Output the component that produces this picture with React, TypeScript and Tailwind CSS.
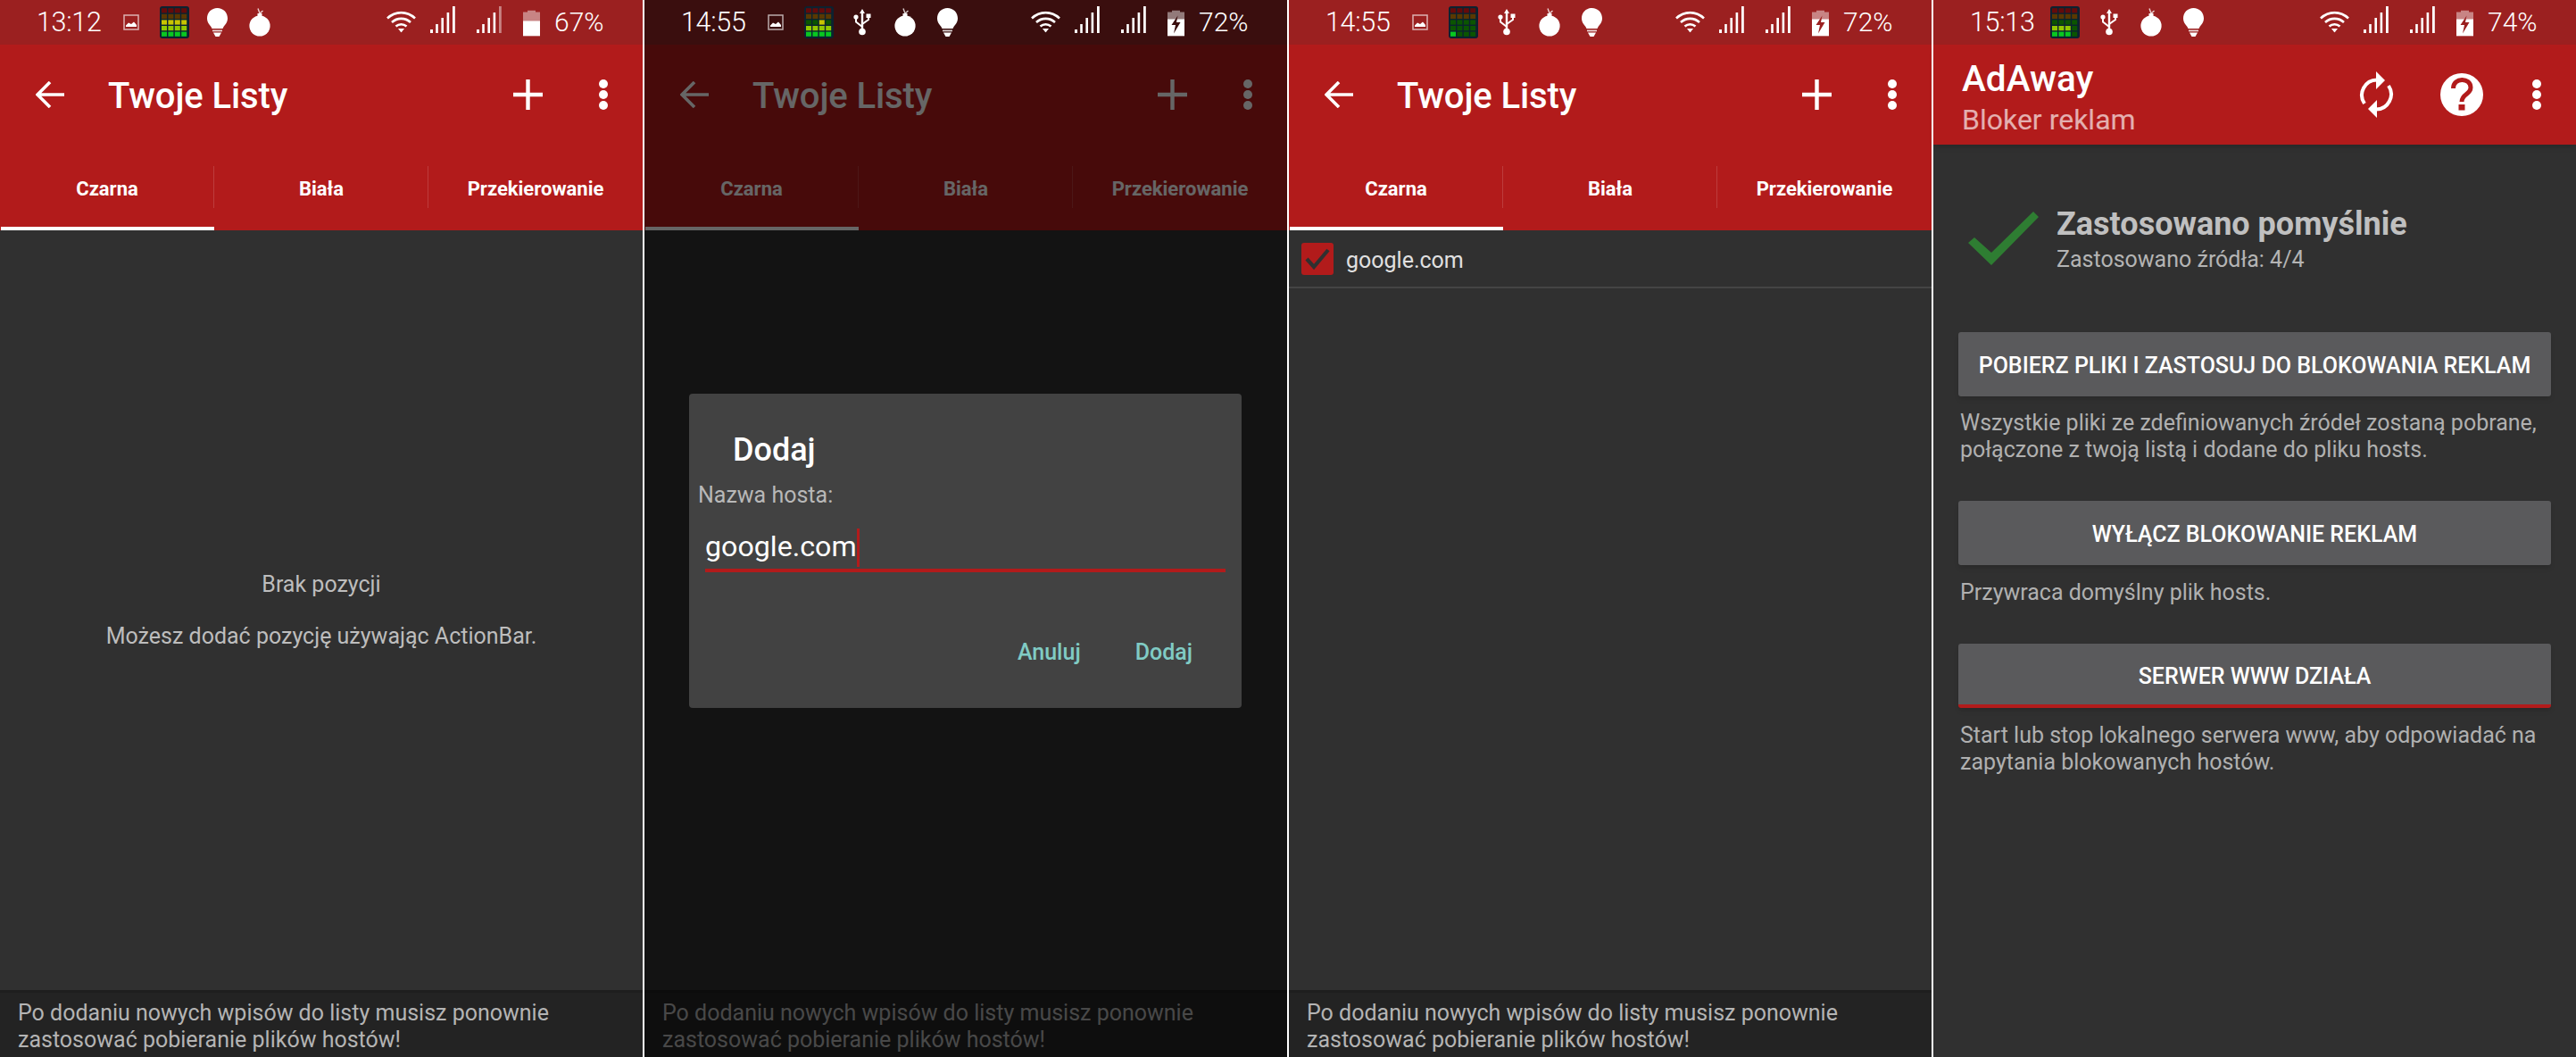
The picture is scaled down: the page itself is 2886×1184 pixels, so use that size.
import React from "react";

function Eq({ lit }: { lit: boolean[][] }) {
  const on = ["#7a0a0a", "#7a4a00", "#c8c400", "#92c800", "#08c820"];
  const off = ["#640a0a", "#5a3800", "#0b5500", "#0b5500", "#0b5500"];
  return (
    <svg width="33" height="36" viewBox="0 0 33 36" className="shrink-0">
      <rect width="33" height="36" rx="3" fill="#0c2230" />
      {lit.map((row, r) =>
        row.map((v, c) => (
          <rect key={`${r}-${c}`} x={2 + c * 7.4} y={2.2 + r * 6.6} width="6" height="5.2" fill={v ? on[r] : off[r]} />
        ))
      )}
    </svg>
  );
}

function ImgIcon() {
  return (
    <svg width="18" height="18" viewBox="0 0 18 18" className="shrink-0">
      <rect x="1" y="1" width="16" height="16" fill="none" stroke="#fff" strokeOpacity="0.65" strokeWidth="1.5" />
      <path d="M3 14 L3 12.5 L6 9.5 L9 11 L12 8.5 L15 12 L15 14 Z" fill="#fff" />
    </svg>
  );
}

function Bulb() {
  return (
    <svg width="23" height="32" viewBox="0 0 23 32" className="shrink-0">
      <path d="M11.5 0 C18 0 23 5 23 11.5 C23 16 20.5 18.5 18.5 21 L17.5 23 L5.5 23 L4.5 21 C2.5 18.5 0 16 0 11.5 C0 5 5 0 11.5 0 Z" fill="#fff" />
      <rect x="6" y="24.5" width="11" height="1.8" fill="#fff" fillOpacity="0.8" />
      <path d="M7 27.5 H16 L13.5 32 H9.5 Z" fill="#fff" />
    </svg>
  );
}

function Bomb() {
  return (
    <svg width="24" height="32" viewBox="0 0 24 32" className="shrink-0">
      <circle cx="12" cy="20" r="11.6" fill="#fff" />
      <rect x="9.5" y="6" width="5" height="4" fill="#fff" />
      <path d="M10 0.5 L12 6 L15.5 3" fill="none" stroke="#fff" strokeOpacity="0.8" strokeWidth="1.4" />
    </svg>
  );
}

function Usb() {
  return (
    <svg width="20" height="30" viewBox="0 0 20 30" className="shrink-0">
      <path d="M10 0 L13 5 H7 Z" fill="#fff" />
      <path d="M10 4 V24" stroke="#fff" strokeWidth="2.4" />
      <circle cx="10" cy="25.5" r="3.8" fill="#fff" />
      <path d="M10 20 L3 14.5 V10" fill="none" stroke="#fff" strokeWidth="2" />
      <circle cx="3" cy="9" r="2.6" fill="#fff" />
      <path d="M10 17 L17 12 V9" fill="none" stroke="#fff" strokeWidth="2" />
      <rect x="14.5" y="5.5" width="5" height="4.5" fill="#fff" />
    </svg>
  );
}

function Wifi() {
  return (
    <svg width="33" height="24" viewBox="0 0 33 24" className="shrink-0">
      <g fill="none" stroke="#fff" strokeWidth="2.6">
        <path d="M1 8 C10 -0.5 23 -0.5 32 8" />
        <path d="M6 12.5 C12 7 21 7 27 12.5" />
        <path d="M10.5 17 C14 14 19 14 22.5 17" />
      </g>
      <path d="M13 19.5 H20 L16.5 24 Z" fill="#fff" />
    </svg>
  );
}

function Signal({ dimLast }: { dimLast?: boolean }) {
  return (
    <svg width="28" height="30" viewBox="0 0 28 30" className="shrink-0">
      <rect x="0" y="26" width="3" height="4" fill="#fff" />
      <rect x="6.2" y="20" width="2.6" height="10" fill="#fff" />
      <rect x="12.4" y="13" width="2.6" height="17" fill="#fff" />
      <rect x="18.6" y="7" width="2.6" height="23" fill="#fff" />
      <rect x="25" y="0" width="2.8" height="30" fill="#fff" fillOpacity={dimLast ? 0.45 : 1} />
    </svg>
  );
}

function Battery({ top, charging, bolt }: { top: number; charging?: boolean; bolt: string }) {
  return (
    <svg width="19" height="29" viewBox="0 0 19 29" className="shrink-0">
      <path d="M5 0 H14 V2 H19 V29 H0 V2 H5 Z" fill="#fff" fillOpacity="0.45" />
      <rect x="0" y={top} width="19" height={29 - top} fill="#fff" />
      {charging && <path d="M11.5 6 L4.5 16.5 H9 L7 26 L14.5 13.5 H10 Z" fill={bolt} />}
    </svg>
  );
}

type S = {
  time: string;
  pct: string;
  bg: string;
  eq: boolean[][];
  charging?: boolean;
  top: number;
  dimLast?: boolean;
  kind: "a" | "b" | "c";
};

function StatusBar({ s }: { s: S }) {
  return (
    <div className="h-[50px] flex items-center pl-[41px] pr-[45px] shrink-0" style={{ backgroundColor: s.bg }}>
      <span className="text-[30.5px] font-light text-white leading-none w-[74px] tracking-[-0.3px] whitespace-nowrap">{s.time}</span>
      {s.kind === "a" && (
        <div className="flex items-center">
          <div className="ml-[23px]"><ImgIcon /></div>
          <div className="ml-[23px]"><Eq lit={s.eq} /></div>
          <div className="ml-[20px]"><Bulb /></div>
          <div className="ml-[24px]"><Bomb /></div>
        </div>
      )}
      {s.kind === "b" && (
        <div className="flex items-center">
          <div className="ml-[23px]"><ImgIcon /></div>
          <div className="ml-[23px]"><Eq lit={s.eq} /></div>
          <div className="ml-[22px]"><Usb /></div>
          <div className="ml-[26px]"><Bomb /></div>
          <div className="ml-[24px]"><Bulb /></div>
        </div>
      )}
      {s.kind === "c" && (
        <div className="flex items-center">
          <div className="ml-[16px]"><Eq lit={s.eq} /></div>
          <div className="ml-[23px]"><Usb /></div>
          <div className="ml-[25px]"><Bomb /></div>
          <div className="ml-[24px]"><Bulb /></div>
        </div>
      )}
      <div className="ml-auto flex items-center gap-[16px]">
        <div className="-translate-y-[0.5px]"><Wifi /></div>
        <div className="-translate-y-[3px]"><Signal /></div>
        <div className="ml-[8px] -translate-y-[3px]"><Signal dimLast={s.dimLast} /></div>
        <div className="ml-[8px] translate-y-[0.5px]"><Battery top={s.top} charging={s.charging} bolt={s.bg} /></div>
        <span className="text-[30px] font-light text-white leading-none w-[54px] whitespace-nowrap">{s.pct}</span>
      </div>
    </div>
  );
}

function Dots() {
  return (
    <svg width="10" height="34" viewBox="0 0 10 34" className="shrink-0">
      <circle cx="5" cy="5" r="5" fill="#fff" />
      <circle cx="5" cy="17" r="5" fill="#fff" />
      <circle cx="5" cy="29" r="5" fill="#fff" />
    </svg>
  );
}

function ListHeader() {
  return (
    <div className="shrink-0 bg-[#b21b1b]">
      <div className="h-[112px] flex items-center pl-[40px] pr-[39px]">
        <svg width="32" height="30" viewBox="0 0 32 30" className="shrink-0">
          <path d="M32 15 H3 M16 1 L2 15 L16 29" fill="none" stroke="#fff" strokeWidth="3.6" />
        </svg>
        <span className="ml-[49px] pt-[3px] text-[40px] leading-none font-medium text-white tracking-[-0.1px]">Twoje Listy</span>
        <svg width="33" height="34" viewBox="0 0 33 34" className="shrink-0 ml-auto">
          <path d="M16.5 0 V34 M0 17 H33" stroke="#fff" strokeWidth="4.4" />
        </svg>
        <div className="ml-[63px] -mt-[1px]"><Dots /></div>
      </div>
      <div className="h-[96px] grid grid-cols-3">
        <div className="relative flex items-center justify-center pt-[4px] text-[22px] leading-none font-bold text-white">
          Czarna
          <div className="absolute left-[1px] right-0 bottom-0 h-[4px] bg-white" />
          <div className="absolute right-0 top-[24px] h-[47px] w-px bg-white/15" />
        </div>
        <div className="relative flex items-center justify-center pt-[4px] text-[22px] leading-none font-bold text-white">
          Biała
          <div className="absolute right-0 top-[24px] h-[47px] w-px bg-white/15" />
        </div>
        <div className="flex items-center justify-center pt-[4px] text-[22px] leading-none font-bold text-white">Przekierowanie</div>
      </div>
    </div>
  );
}

function Footer() {
  return (
    <div className="mt-auto h-[75px] shrink-0 bg-[#232323] border-t-[3px] border-[#1e1e1e] pl-[20px] pt-[8px] text-[25px] leading-[30px] text-[#b4b4b4] whitespace-nowrap">
      <div>Po dodaniu nowych wpisów do listy musisz ponownie</div>
      <div>zastosować pobieranie plików hostów!</div>
    </div>
  );
}

const EQ_A = [
  [false, false, false, false],
  [false, false, false, false],
  [true, true, true, true],
  [true, true, true, true],
  [true, true, true, true],
];
const EQ_B = [
  [false, false, false, false],
  [false, false, false, false],
  [false, false, true, false],
  [true, true, true, true],
  [true, true, true, true],
];
const EQ_C = [
  [false, false, false, false],
  [false, false, false, false],
  [false, false, false, false],
  [false, false, false, false],
  [true, false, false, false],
];
const EQ_D = [
  [false, false, false, false],
  [false, false, false, false],
  [false, false, false, false],
  [true, true, true, false],
  [true, true, true, false],
];

function Panel1() {
  return (
    <div className="w-[720px] h-full flex flex-col bg-[#303030] shrink-0">
      <StatusBar s={{ time: "13:12", pct: "67%", bg: "#9b2020", eq: EQ_A, top: 12, dimLast: true, kind: "a" }} />
      <ListHeader />
      <div className="flex-1 flex flex-col items-center justify-center gap-[28px] pt-[1px] text-[25px] leading-[30px] text-[#bdbdbd]">
        <div>Brak pozycji</div>
        <div>Możesz dodać pozycję używając ActionBar.</div>
      </div>
      <Footer />
    </div>
  );
}

function Panel2() {
  return (
    <div className="relative w-[720px] h-full flex flex-col bg-[#303030] shrink-0">
      <StatusBar s={{ time: "14:55", pct: "72%", bg: "#3a0e0e", eq: EQ_B, top: 10, charging: true, kind: "b" }} />
      <ListHeader />
      <div className="flex-1" />
      <Footer />
      <div className="absolute inset-x-0 top-[50px] bottom-0 bg-black/60 flex items-center">
        <div className="ml-[50px] w-[619px] h-[352px] bg-[#424242] rounded-[4px] flex flex-col">
          <div className="pl-[49px] pt-[43px] text-[36px] leading-[40px] font-medium text-white">Dodaj</div>
          <div className="pl-[10px] mt-[16px] text-[25px] leading-[30px] text-[#b8b8b8]">Nazwa hosta:</div>
          <div className="mx-[18px] mt-[15px] h-[56px] border-b-[4px] border-[#b21b1b] flex items-center">
            <span className="text-[32.2px] leading-none text-white pt-[3px]">google.com</span>
            <span className="w-[3px] h-[43px] bg-[#b21b1b] mt-[4px]" />
          </div>
          <div className="mt-auto mb-[47px] flex justify-end pr-[55px] gap-[61px] text-[25px] leading-[30px] font-medium text-[#80cbc4]">
            <span>Anuluj</span>
            <span>Dodaj</span>
          </div>
        </div>
      </div>
    </div>
  );
}

function Panel3() {
  return (
    <div className="w-[720px] h-full flex flex-col bg-[#303030] shrink-0">
      <StatusBar s={{ time: "14:55", pct: "72%", bg: "#9b2020", eq: EQ_C, top: 10, charging: true, kind: "b" }} />
      <ListHeader />
      <div className="h-[65px] border-b-2 border-[#444444] flex items-center pl-[14px] shrink-0">
        <div className="w-[36px] h-[36px] rounded-[3px] bg-[#b21b1b] flex items-center justify-center">
          <svg width="28" height="24" viewBox="0 0 28 24">
            <path d="M2 12 L10 21 L26 2" fill="none" stroke="#303030" strokeWidth="4.2" />
          </svg>
        </div>
        <span className="ml-[14px] pt-[3px] text-[25px] leading-none text-[#e0e0e0]">google.com</span>
      </div>
      <div className="flex-1" />
      <Footer />
    </div>
  );
}

function Action({ label, active }: { label: string; active?: boolean }) {
  return (
    <div
      className={`h-[72px] w-[664px] rounded-[3px] bg-[#5a5a5c] shadow-md flex items-center justify-center text-[25px] leading-none font-medium text-white whitespace-nowrap ${
        active ? "border-b-4 border-[#b21b1b] pt-[5px]" : "pt-[2px]"
      }`}
    >
      {label}
    </div>
  );
}

function Panel4() {
  return (
    <div className="w-[720px] h-full flex flex-col bg-[#303030] shrink-0">
      <StatusBar s={{ time: "15:13", pct: "74%", bg: "#9b2020", eq: EQ_D, top: 10, charging: true, kind: "c" }} />
      <div className="h-[112px] bg-[#b21b1b] shrink-0 flex items-center pl-[32px] pr-[39px] shadow-md">
        <div className="flex flex-col pt-[6px]">
          <span className="text-[40.5px] leading-[44px] font-medium text-white">AdAway</span>
          <span className="text-[32px] leading-[36px] text-white/65 mt-[6px]">Bloker reklam</span>
        </div>
        <svg width="39" height="52" viewBox="0 0 39 52" className="shrink-0 ml-auto">
          <g fill="none" stroke="#fff" strokeWidth="4">
            <path d="M6 36 A 17 17 0 0 1 20 9.5" />
            <path d="M33 16 A 17 17 0 0 1 19 42.5" />
          </g>
          <path d="M19 0 L29 10 L19 20 Z" fill="#fff" />
          <path d="M20 32 L10 42 L20 52 Z" fill="#fff" />
        </svg>
        <svg width="48" height="48" viewBox="0 0 48 48" className="shrink-0 ml-[52px]">
          <circle cx="24" cy="24" r="24" fill="#fff" />
          <path d="M14.5 17 C14.5 4.5 34 4.5 34 16 C34 24 24 23 24 32" fill="none" stroke="#b21b1b" strokeWidth="5" />
          <rect x="20.5" y="35" width="7" height="6.5" fill="#b21b1b" />
        </svg>
        <div className="ml-[55px]"><Dots /></div>
      </div>
      <div className="flex items-start pl-[39px] pt-[75px] h-[135px] shrink-0">
        <svg width="79" height="60" viewBox="0 0 79 60" className="shrink-0">
          <path d="M0 35 L7 29 L26 46 L73 0 L79 6 L26 60 Z" fill="#2e7d32" />
        </svg>
        <div className="ml-[20px] -mt-[7px]">
          <div className="text-[36px] leading-[42px] font-bold text-[#c0c0c0] whitespace-nowrap">Zastosowano pomyślnie</div>
          <div className="text-[25px] leading-[30px] text-[#b4b4b4] mt-[4px] whitespace-nowrap">Zastosowano źródła: 4/4</div>
        </div>
      </div>
      <div className="flex flex-col pl-[28px] pt-[75px] text-[25px] leading-[30px] text-[#b0b0b0] whitespace-nowrap">
        <Action label="POBIERZ PLIKI I ZASTOSUJ DO BLOKOWANIA REKLAM" />
        <div className="pl-[2px] mt-[15px]">Wszystkie pliki ze zdefiniowanych źródeł zostaną pobrane,</div>
        <div className="pl-[2px]">połączone z twoją listą i dodane do pliku hosts.</div>
        <div className="mt-[42px]"><Action label="WYŁĄCZ BLOKOWANIE REKLAM" /></div>
        <div className="pl-[2px] mt-[16px]">Przywraca domyślny plik hosts.</div>
        <div className="mt-[42px]"><Action label="SERWER WWW DZIAŁA" active /></div>
        <div className="pl-[2px] mt-[16px]">Start lub stop lokalnego serwera www, aby odpowiadać na</div>
        <div className="pl-[2px]">zapytania blokowanych hostów.</div>
      </div>
    </div>
  );
}

export default function App() {
  return (
    <div className="w-[2886px] h-[1184px] flex gap-[2px] bg-white overflow-hidden font-['Roboto',sans-serif]">
      <Panel1 />
      <Panel2 />
      <Panel3 />
      <Panel4 />
    </div>
  );
}
